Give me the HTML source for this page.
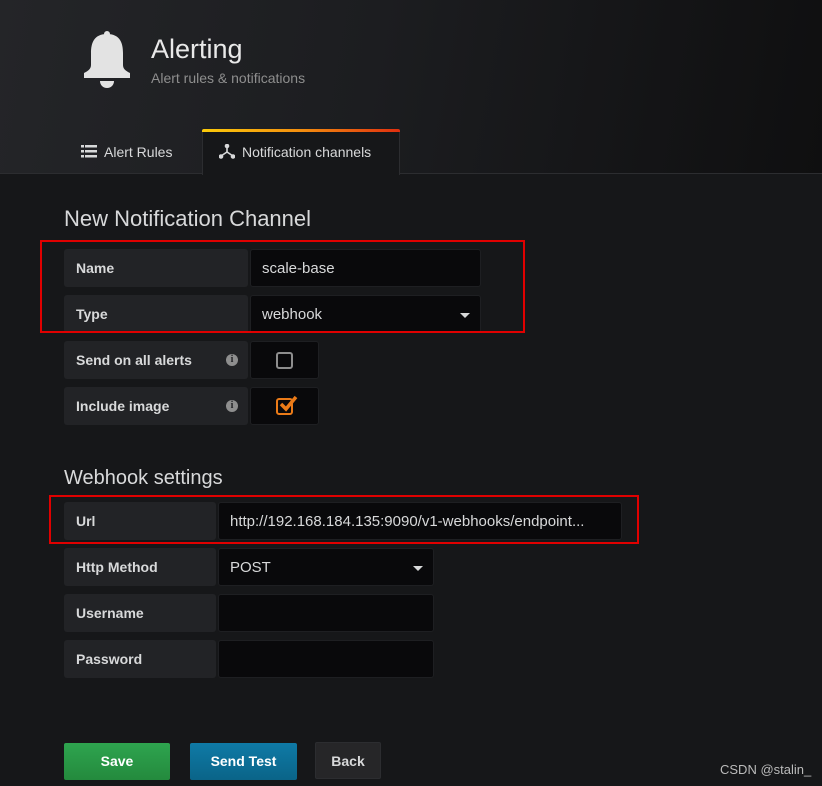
<!DOCTYPE html>
<html><head><style>
*{margin:0;padding:0;box-sizing:border-box}
body{width:822px;height:786px;background:#161719;font-family:"Liberation Sans",sans-serif;color:#d8d9da;position:relative;overflow:hidden}
.a{position:absolute}
.hdr{left:0;top:0;width:822px;height:174px;background:linear-gradient(100deg,#242528 0%,#1c1d20 45%,#0f0f10 100%);border-bottom:1px solid #2c2d30}
.lbl{position:absolute;background:#222326;border-radius:3px;font-weight:bold;font-size:14px;color:#d8d9da;padding-left:12px;line-height:38px;height:38px}
.inp{position:absolute;background:#09090b;border:1px solid #1e1f22;border-radius:3px;font-size:15px;color:#d8d9da;padding-left:11px;line-height:38px;height:38px}
.caret{position:absolute;right:10px;top:17px;width:0;height:0;border-left:5px solid transparent;border-right:5px solid transparent;border-top:5px solid #d8d9da}
.info{position:absolute;width:12px;height:12px;border-radius:50%;background:#8e8e8e;color:#222326;font-size:10px;font-weight:bold;text-align:center;line-height:12px;font-family:"Liberation Serif",serif}
.red{position:absolute;border:2px solid #e00000;z-index:5}
.btn{position:absolute;height:37px;line-height:37px;text-align:center;font-weight:bold;font-size:14px;color:#fff;border-radius:2px}
</style></head><body>
<div class="a hdr"></div>
<svg class="a" style="left:82px;top:31px" width="50" height="58" viewBox="0 0 50 58">
<rect x="22" y="0" width="6" height="6" rx="3" fill="#e3e3e3"/>
<path d="M25 3C12 3 9 12 9 22V34C9 38 6 40 2 42V47H48V42C44 40 41 38 41 34V22C41 12 38 3 25 3z" fill="#e3e3e3"/>
<path d="M18 50h14c0 4-3 7-7 7s-7-3-7-7z" fill="#e3e3e3"/>
</svg>
<div class="a" style="left:151px;top:34px;font-size:27px;color:#e9e9e9">Alerting</div>
<div class="a" style="left:151px;top:70px;font-size:14px;color:#8e8e8e">Alert rules &amp; notifications</div>
<svg class="a" style="left:81px;top:145px" width="16" height="13" viewBox="0 0 16 13"><g fill="#d8d9da"><rect x="0" y="0" width="3" height="2.5"/><rect x="4" y="0" width="12" height="2.5"/><rect x="0" y="5" width="3" height="2.5"/><rect x="4" y="5" width="12" height="2.5"/><rect x="0" y="10" width="3" height="2.5"/><rect x="4" y="10" width="12" height="2.5"/></g></svg>
<div class="a" style="left:104px;top:144px;font-size:14px;color:#d8d9da">Alert Rules</div>
<div class="a" style="left:202px;top:130px;width:198px;height:45px;background:#161719;border-left:1px solid #2c2d30;border-right:1px solid #2c2d30"></div>
<div class="a" style="left:202px;top:129px;width:198px;height:3px;background:linear-gradient(90deg,#fbca0a,#f38e0f 50%,#e02f0f);border-radius:2px 2px 0 0"></div>
<svg class="a" style="left:219px;top:144px" width="16" height="15" viewBox="0 0 16 15"><g stroke="#d8d9da" stroke-width="1.6" fill="#d8d9da"><line x1="8" y1="2" x2="8" y2="8"/><line x1="8" y1="8" x2="2" y2="12"/><line x1="8" y1="8" x2="14" y2="12"/><circle cx="8" cy="2" r="1.5"/><circle cx="2" cy="12.5" r="1.5"/><circle cx="14" cy="12.5" r="1.5"/></g></svg>
<div class="a" style="left:242px;top:144px;font-size:14px;color:#d8d9da">Notification channels</div>

<div class="a" style="left:64px;top:206px;font-size:22px;color:#d8d9da">New Notification Channel</div>
<div class="lbl" style="left:64px;top:249px;width:184px">Name</div>
<div class="inp" style="left:250px;top:249px;width:231px">scale-base</div>
<div class="lbl" style="left:64px;top:295px;width:184px">Type</div>
<div class="inp" style="left:250px;top:295px;width:231px">webhook<div class="caret"></div></div>
<div class="lbl" style="left:64px;top:341px;width:184px">Send on all alerts<div class="info" style="left:162px;top:13px">i</div></div>
<div class="inp" style="left:250px;top:341px;width:69px"><div class="a" style="left:25px;top:10px;width:17px;height:17px;border:2px solid #8e8e8e;border-radius:3px"></div></div>
<div class="lbl" style="left:64px;top:387px;width:184px">Include image<div class="info" style="left:162px;top:13px">i</div></div>
<div class="inp" style="left:250px;top:387px;width:69px"><div class="a" style="left:25px;top:10px;width:17px;height:17px;border:2px solid #eb7b18;border-radius:3px"></div>
<svg class="a" style="left:27px;top:6px" width="20" height="18" viewBox="0 0 20 18"><path d="M3 10l5 5L18 3" stroke="#eb7b18" stroke-width="3.5" fill="none"/></svg></div>
<div class="red" style="left:40px;top:240px;width:485px;height:93px"></div>

<div class="a" style="left:64px;top:467px;font-size:20px;color:#d8d9da">Webhook settings</div>
<div class="lbl" style="left:64px;top:502px;width:152px">Url</div>
<div class="inp" style="left:218px;top:502px;width:404px">http://192.168.184.135:9090/v1-webhooks/endpoint...</div>
<div class="red" style="left:49px;top:495px;width:590px;height:49px"></div>
<div class="lbl" style="left:64px;top:548px;width:152px">Http Method</div>
<div class="inp" style="left:218px;top:548px;width:216px">POST<div class="caret"></div></div>
<div class="lbl" style="left:64px;top:594px;width:152px">Username</div>
<div class="inp" style="left:218px;top:594px;width:216px"></div>
<div class="lbl" style="left:64px;top:640px;width:152px">Password</div>
<div class="inp" style="left:218px;top:640px;width:216px"></div>

<div class="btn" style="left:64px;top:743px;width:106px;background:linear-gradient(#2ea44f,#248a3d)">Save</div>
<div class="btn" style="left:190px;top:743px;width:107px;background:linear-gradient(#0f7aa6,#0a6488)">Send Test</div>
<div class="btn" style="left:315px;top:742px;width:66px;background:#262628;color:#d8d9da;border:1px solid #2c2d30">Back</div>
<div class="a" style="left:720px;top:762px;font-size:13px;color:#bbb">CSDN @stalin_</div>
</body></html>
